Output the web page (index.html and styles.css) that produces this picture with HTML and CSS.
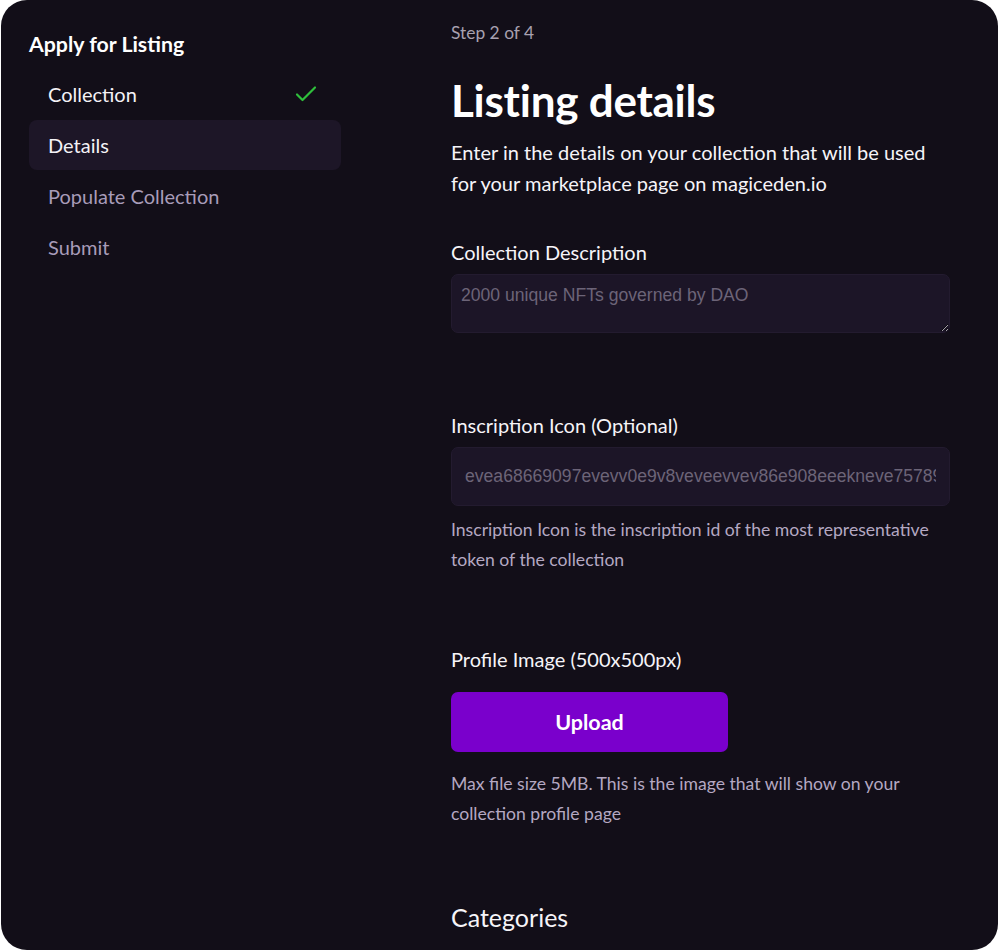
FILE: index.html
```html
<!DOCTYPE html>
<html lang="en">
<head>
<meta charset="utf-8">
<title>Apply for Listing</title>
<link rel="stylesheet" href="styles.css">
</head>
<body>
<div class="panel">
  <aside class="sidebar">
    <h2 class="side-title">Apply for Listing</h2>
    <nav class="steps">
      <div class="step done"><span>Collection</span>
        <svg class="check" width="22" height="18" viewBox="0 0 22 18"><polyline points="2,9.5 7.5,15 20,2.5" fill="none" stroke="#2fbf3c" stroke-width="2.2" stroke-linecap="round" stroke-linejoin="round"/></svg>
      </div>
      <div class="step active"><span>Details</span></div>
      <div class="step"><span>Populate Collection</span></div>
      <div class="step"><span>Submit</span></div>
    </nav>
  </aside>
  <main class="main">
    <div class="step-count">Step 2 of 4</div>
    <h1 class="title">Listing details</h1>
    <p class="subtitle">Enter in the details on your collection that will be used for your marketplace page on magiceden.io</p>

    <label class="label l-desc">Collection Description</label>
    <textarea class="textarea" placeholder="2000 unique NFTs governed by DAO"></textarea>

    <label class="label l-icon">Inscription Icon (Optional)</label>
    <input class="input" type="text" placeholder="evea68669097evevv0e9v8veveevvev86e908eeekneve757899eveve">
    <p class="help h-icon">Inscription Icon is the inscription id of the most representative token of the collection</p>

    <label class="label l-profile">Profile Image (500x500px)</label>
    <button class="upload">Upload</button>
    <p class="help h-upload">Max file size 5MB. This is the image that will show on your collection profile page</p>

    <h3 class="categories">Categories</h3>
  </main>
</div>
</body>
</html>
```
FILE: styles.css
```css
* { box-sizing: border-box; }
html, body { margin: 0; padding: 0; background: #ffffff; }
body { font-family: Lato, "Noto Sans", sans-serif; overflow: hidden; }

.panel {
  margin-left: 1px;
  width: 997px;
  height: 950px;
  background: #120e18;
  border-radius: 26px;
  overflow: hidden;
  display: grid;
  grid-template-columns: 312px 499px;
  column-gap: 110px;
  padding: 0 48px 0 28px;
  color: #f4f2f6;
}

.side-title {
  margin: 31px 0 0 0;
  font-size: 21.3px;
  line-height: 26px;
  font-weight: 700;
  color: #ffffff;
}
.steps { margin-top: 12px; display: flex; flex-direction: column; gap: 1px; }
.step {
  height: 50px;
  padding: 0 24px 0 19px;
  display: flex;
  align-items: center;
  justify-content: space-between;
  border-radius: 8px;
  font-size: 20px;
  color: #a89cb9;
}
.step.done { color: #f4f2f6; }
.step.active { background: #1d1627; color: #f4f2f6; }
.check { display: block; }

.main { display: flex; flex-direction: column; align-items: flex-start; }
.step-count {
  margin-top: 21px;
  font-size: 17.4px;
  line-height: 24px;
  color: #a8a1b0;
}
.title {
  margin: 29px 0 0 0;
  font-size: 44px;
  line-height: 52px;
  font-weight: 700;
  letter-spacing: -0.25px;
  color: #ffffff;
}
.subtitle {
  margin: 11px 0 0 0;
  font-size: 20px;
  line-height: 31px;
  color: #f6f4f8;
}
.label {
  display: block;
  font-size: 20px;
  line-height: 28px;
  color: #f6f4f8;
}
.l-desc { margin-top: 39px; }
.l-icon { margin-top: 78px; }
.l-profile { margin-top: 70px; }

.textarea, .input {
  width: 499px;
  height: 59px;
  margin-top: 8px;
  background: #1c1527;
  border: 1px solid #231b2f;
  border-radius: 7px;
  color: #f4f2f6;
  font-family: "Liberation Sans", Arial, sans-serif;
  font-size: 17.6px;
  outline: none;
}
.textarea { padding: 10px 9px 6px; resize: vertical; }
.input { padding: 0 13px; }
.textarea::placeholder, .input::placeholder { color: #6c6478; opacity: 1; }

.help {
  margin: 0;
  font-size: 17.6px;
  line-height: 30px;
  color: #b4a8c2;
}
.h-icon { margin-top: 9px; }
.h-upload { margin-top: 17px; }

.upload {
  margin-top: 19px;
  width: 277px;
  height: 60px;
  border: none;
  border-radius: 7px;
  background: #7a00cc;
  color: #ffffff;
  font-family: Lato, "Noto Sans", sans-serif;
  font-size: 21.5px;
  font-weight: 700;
}
.categories {
  margin: 72px 0 0 0;
  font-size: 25px;
  line-height: 32px;
  font-weight: 400;
  color: #f6f4f8;
}
```
